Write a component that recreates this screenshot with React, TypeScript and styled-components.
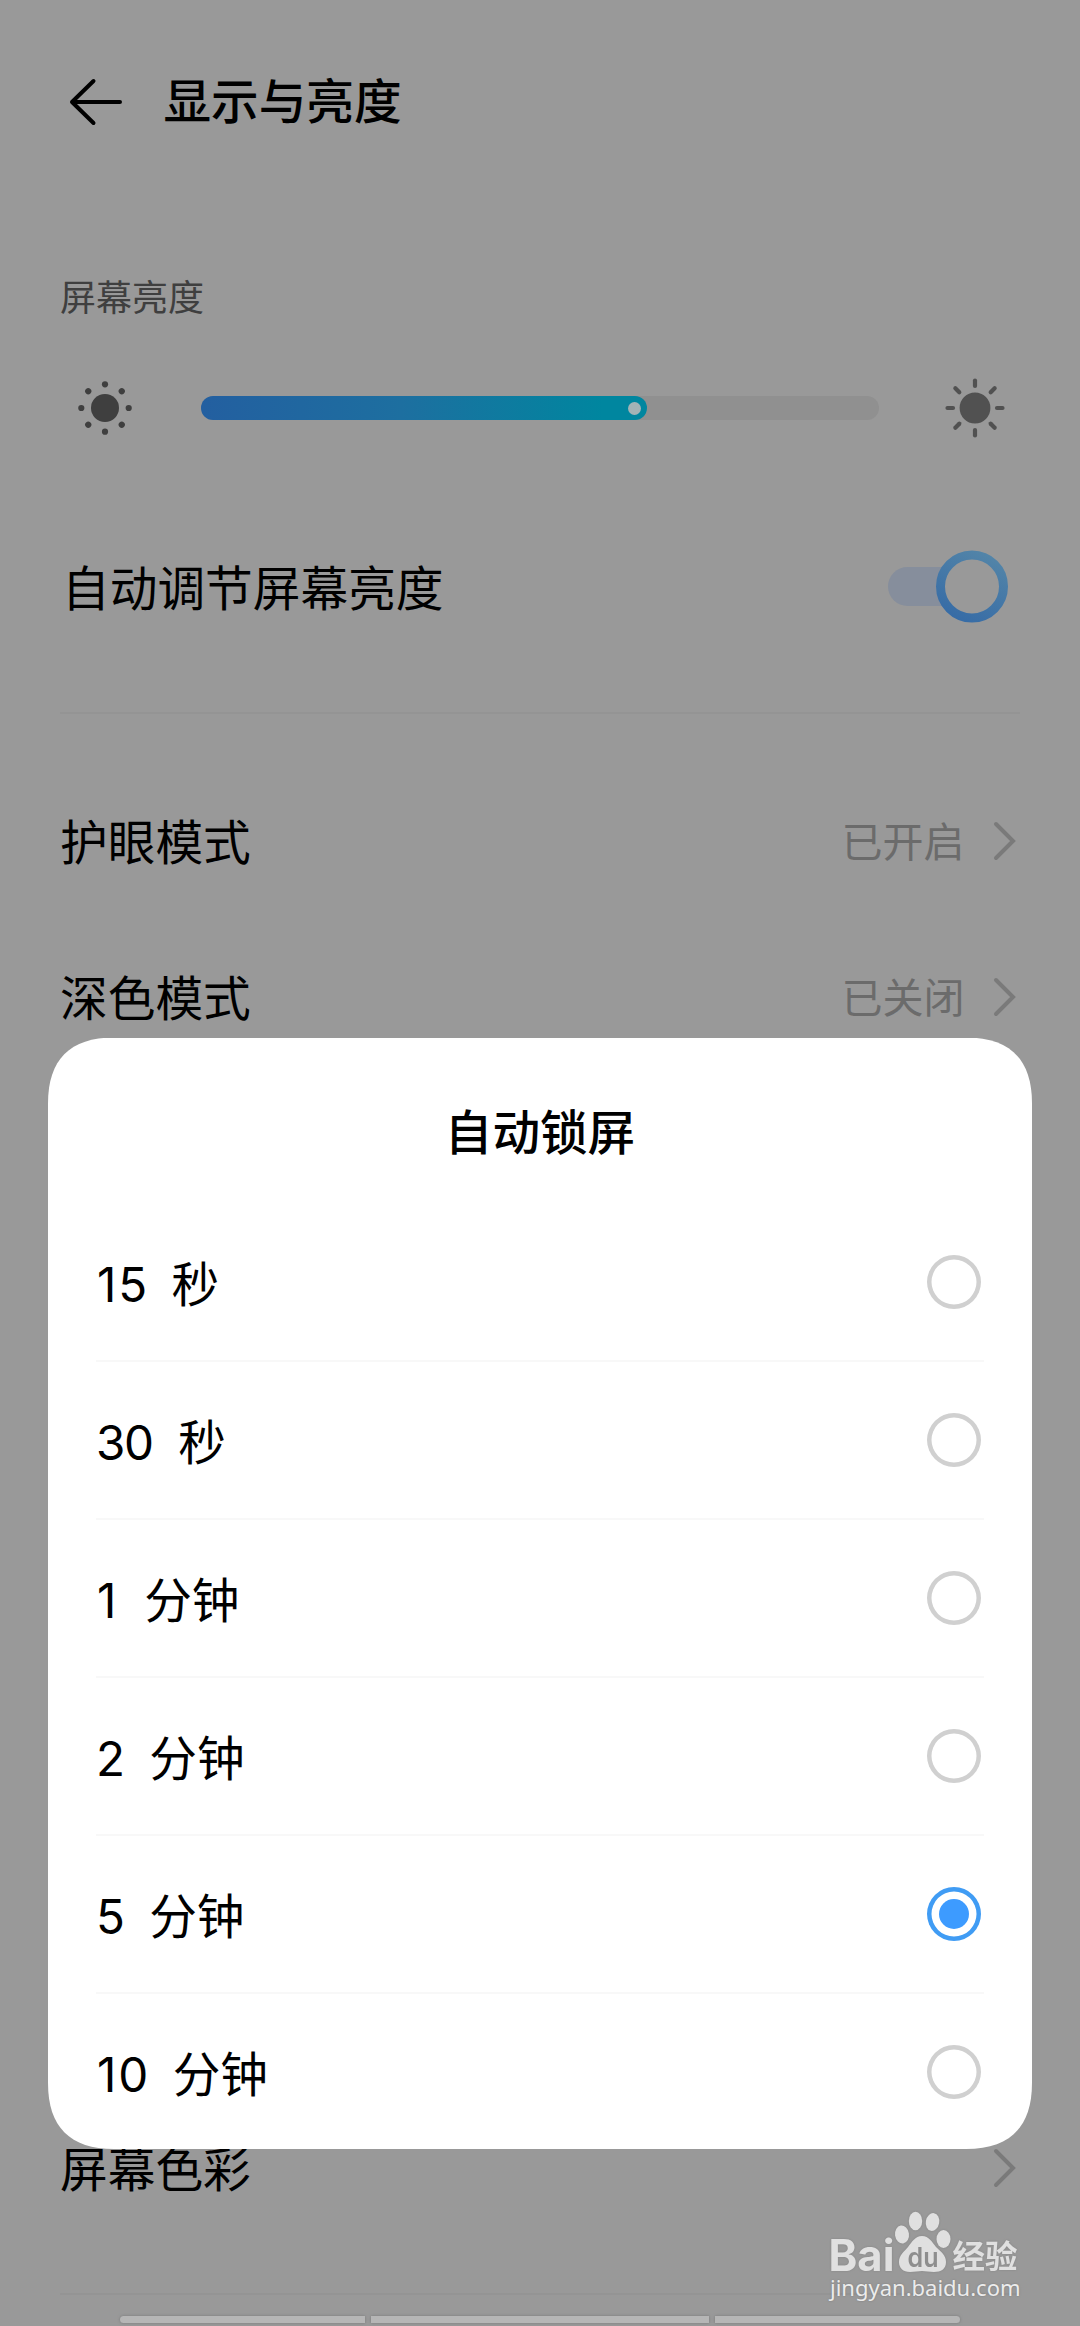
import React from 'react';
import styled, { createGlobalStyle } from 'styled-components';

const Global = createGlobalStyle`
  *, *::before, *::after { box-sizing: border-box; }
  body {
    margin: 0;
    background: #999;
    color: #000;
    font-family: Inter, "Noto Sans CJK SC", sans-serif;
  }
`;

const Screen = styled.div`
  position: relative;
  width: 1080px;
  height: 2326px;
  overflow: hidden;
  background: #999;
`;

const Page = styled.main`
  display: flex;
  flex-direction: column;
  height: 100%;
  padding: 0 60px;
`;

const Header = styled.header`
  display: flex;
  align-items: center;
  height: 204px;
  padding-left: 8px;
  gap: 37.5px;
`;

const Title = styled.h1`
  margin: 0;
  font-size: 47.6px;
  font-weight: 500;
  line-height: 64px;
`;

const SectionLabel = styled.h2`
  margin: 0;
  height: 172px;
  padding-top: 68px;
  font-size: 36px;
  font-weight: 400;
  line-height: 52px;
  color: #3f3f3f;
`;

const BrightnessRow = styled.div`
  display: flex;
  align-items: center;
  height: 64px;
  padding: 0 13px;
`;

const Track = styled.div`
  flex: 1;
  display: flex;
  height: 24px;
  margin: 0 64px;
  border-radius: 12px;
  background: #909090;
`;

const Fill = styled.div`
  display: flex;
  align-items: center;
  justify-content: flex-end;
  width: 446px;
  padding-right: 6px;
  border-radius: 12px;
  background: linear-gradient(90deg, #235fa0, #1d6fa0 45%, #00869f 90%, #00869f);
`;

const Thumb = styled.span`
  width: 13px;
  height: 13px;
  border-radius: 50%;
  background: #a3b3b6;
`;

const Row = styled.div`
  display: flex;
  align-items: center;
  justify-content: space-between;
  height: 156px;
  padding-right: 3px;
`;

const SwitchRow = styled(Row)`
  height: 272px;
  padding: 22px 12px 0 2px;
`;

const RowName = styled.span`
  padding-top: 4px;
  font-size: 47.7px;
  line-height: 64px;
`;

const RowEnd = styled.span`
  display: flex;
  align-items: center;
  gap: 27.5px;
`;

const RowValue = styled.span`
  padding-top: 2px;
  font-size: 41px;
  line-height: 56px;
  color: #6b6b6b;
`;

const Rule = styled.hr<{ $before?: number; $after?: number }>`
  width: 100%;
  height: 2px;
  margin: ${(p) => p.$before ?? 0}px 0 ${(p) => p.$after ?? 0}px;
  border: 0;
  background: #949494;
`;

const Covered = styled.div`
  height: 1015px;
`;

const Sheet = styled.section`
  position: absolute;
  left: 48px;
  top: 1037.5px;
  width: 984px;
  height: 1111.5px;
  padding: 0 48px;
  background: #fff;
  overflow: hidden;
  clip-path: path("M0 66 C0 22 22 0 66 0 H918 C962 0 984 22 984 66 V1045.5 C984 1089.5 962 1111.5 918 1111.5 H66 C22 1111.5 0 1089.5 0 1045.5 Z");
`;

const SheetTitle = styled.h2`
  margin: 0;
  height: 166.5px;
  padding-top: 63.5px;
  text-align: center;
  font-size: 47.6px;
  font-weight: 500;
  line-height: 64px;
`;

const Option = styled.label`
  display: flex;
  align-items: center;
  justify-content: space-between;
  height: 158px;
  padding-right: 3px;
  border-bottom: 2px solid #f8f8f8;
  &:last-child { border-bottom-color: transparent; }
`;

const OptionName = styled.span`
  padding-top: 5px;
  font-size: 47.6px;
  line-height: 64px;
  word-spacing: 12.4px;
  white-space: pre;
`;

const Digit = styled.span<{ $one: boolean }>`
  letter-spacing: -1.5px;
  padding: 0 ${(p) => (p.$one ? 3.5 : 0)}px 0 ${(p) => (p.$one ? 1 : 0)}px;
`;

const Radio = styled.span<{ $on: boolean }>`
  display: grid;
  place-items: center;
  width: 54px;
  height: 54px;
  box-shadow: inset 0 0 0 4.5px ${(p) => (p.$on ? '#409cf4' : '#d0d0d0')};
  border-radius: 50%;
  &::after {
    content: "";
    width: 30px;
    height: 30px;
    border-radius: 50%;
    background: ${(p) => (p.$on ? '#3d9bff' : 'transparent')};
  }
`;

const NavBar = styled.div`
  position: absolute;
  left: 120px;
  bottom: 3px;
  display: flex;
  gap: 6px;
`;

const NavPiece = styled.span<{ $w: number; $r: string }>`
  width: ${(p) => p.$w}px;
  height: 7px;
  border-radius: ${(p) => p.$r};
  background: #b6b6b6;
  box-shadow: 0 0 3px #777;
`;

const Watermark = styled.div`
  position: absolute;
  left: 826px;
  top: 2208px;
  color: #e0e0e0;
`;

const Brand = styled.svg`
  display: block;
  overflow: visible;
  filter: drop-shadow(0 0 1px #858585);
`;

const Site = styled.div`
  margin-top: -2px;
  padding-left: 4px;
  font: 22px/26px "Noto Sans", sans-serif;
  color: #ececec;
  text-shadow: 0 0 2px #777;
`;

const BackArrow = () => (
  <svg width="58" height="50" viewBox="0 0 58 50" fill="none" stroke="#000" strokeWidth="4" strokeLinecap="round" strokeLinejoin="round">
    <path d="M25.5 4 L4 25 L25.5 46 M4 25 H52" />
  </svg>
);

const DimSun = () => (
  <svg width="64" height="64" viewBox="-32 -32 64 64" fill="#3f3f3f">
    <circle r="14" />
    {[0, 45, 90, 135, 180, 225, 270, 315].map((a) => (
      <circle key={a} cx="23.7" r="3.1" transform={`rotate(${a})`} />
    ))}
  </svg>
);

const BrightSun = () => (
  <svg width="64" height="64" viewBox="-32 -32 64 64" fill="#515151" stroke="#515151" strokeWidth="4.2" strokeLinecap="round">
    <circle r="15.4" stroke="none" />
    {[0, 45, 90, 135, 180, 225, 270, 315].map((a) => (
      <path key={a} d={a % 90 ? 'M22.2 0H27.8' : 'M22 0H27.5'} transform={`rotate(${a})`} />
    ))}
  </svg>
);

const Switch = () => (
  <svg width="120" height="74" viewBox="0 0 120 74">
    <defs>
      <linearGradient id="ring" x1="0.25" y1="1" x2="0.75" y2="0">
        <stop offset="0" stopColor="#376ca6" />
        <stop offset="1" stopColor="#5284a8" />
      </linearGradient>
    </defs>
    <rect x="0" y="17" width="100" height="39" rx="19.5" fill="#868e9c" />
    <circle cx="84" cy="36.5" r="31.5" fill="#999" stroke="url(#ring)" strokeWidth="9" />
  </svg>
);

const Chevron = () => (
  <svg width="25" height="42" viewBox="0 0 25 42" fill="none" stroke="#7a7a7a" strokeWidth="4" strokeLinecap="round">
    <path d="M4 4 L21 21 L4 38" />
  </svg>
);

const options = [
  { amount: '15', unit: '秒' },
  { amount: '30', unit: '秒' },
  { amount: '1', unit: '分钟' },
  { amount: '2', unit: '分钟' },
  { amount: '5', unit: '分钟', selected: true },
  { amount: '10', unit: '分钟' },
];

export default function App() {
  return (
    <Screen>
      <Global />
      <Page>
        <Header>
          <BackArrow />
          <Title>显示与亮度</Title>
        </Header>
        <SectionLabel>屏幕亮度</SectionLabel>
        <BrightnessRow>
          <DimSun />
          <Track>
            <Fill>
              <Thumb />
            </Fill>
          </Track>
          <BrightSun />
        </BrightnessRow>
        <SwitchRow>
          <RowName>自动调节屏幕亮度</RowName>
          <Switch />
        </SwitchRow>
        <Rule $after={49} />
        <Row>
          <RowName>护眼模式</RowName>
          <RowEnd>
            <RowValue>已开启</RowValue>
            <Chevron />
          </RowEnd>
        </Row>
        <Row>
          <RowName>深色模式</RowName>
          <RowEnd>
            <RowValue>已关闭</RowValue>
            <Chevron />
          </RowEnd>
        </Row>
        <Covered />
        <Row>
          <RowName>屏幕色彩</RowName>
          <Chevron />
        </Row>
        <Rule $before={47} />
      </Page>
      <Sheet>
        <SheetTitle>自动锁屏</SheetTitle>
        {options.map(({ amount, unit, selected }) => (
          <Option key={amount}>
            <OptionName>
              {amount.split('').map((d) => (
                <Digit key={d} $one={d === '1'}>{d}</Digit>
              ))}
              {` ${unit}`}
            </OptionName>
            <Radio $on={!!selected} />
          </Option>
        ))}
      </Sheet>
      <NavBar>
        <NavPiece $w={245} $r="4px 0 0 4px" />
        <NavPiece $w={338} $r="0" />
        <NavPiece $w={245} $r="0 4px 4px 0" />
      </NavBar>
      <Watermark>
        <Brand width="200" height="68" viewBox="0 0 200 68" fill="#e0e0e0">
          <text x="2.5" y="63" fontFamily="Inter, sans-serif" fontWeight="700" fontSize="44" textLength="66" lengthAdjust="spacingAndGlyphs">Bai</text>
          <ellipse cx="76" cy="26.5" rx="7" ry="9" transform="rotate(-8 76 26.5)" />
          <ellipse cx="89.5" cy="13" rx="6.7" ry="9.2" />
          <ellipse cx="106.5" cy="14" rx="6.7" ry="9" transform="rotate(10 106.5 14)" />
          <ellipse cx="117.5" cy="31" rx="7" ry="9" />
          <path d="M96 28 C103 28 106 34 110 39 C115 44 120 47 120 54 C120 61 115 64 108 64 C103 64 100 63 96 63 C92 63 89 64 84 64 C77 64 73 60 73 54 C73 47 78 44 82 39 C86 34 89 28 96 28 Z" />
          <text x="81.5" y="58.5" fontFamily="Inter, sans-serif" fontWeight="600" fontSize="27" fill="#8e8e8e" textLength="31" lengthAdjust="spacingAndGlyphs">du</text>
          <text x="126.5" y="60" fontFamily="Noto Sans CJK SC, sans-serif" fontWeight="700" fontSize="32" textLength="65" lengthAdjust="spacingAndGlyphs">经验</text>
        </Brand>
        <Site>jingyan.baidu.com</Site>
      </Watermark>
    </Screen>
  );
}
